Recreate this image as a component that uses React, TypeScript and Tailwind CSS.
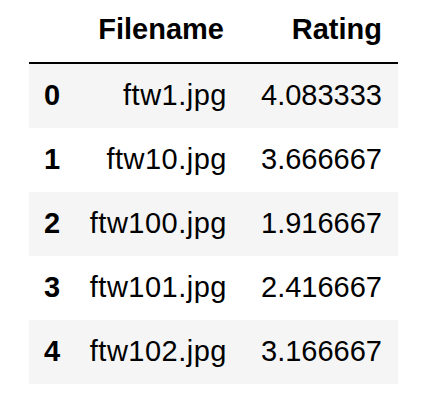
const rows = [
  { idx: 0, file: "ftw1.jpg", rating: "4.083333" },
  { idx: 1, file: "ftw10.jpg", rating: "3.666667" },
  { idx: 2, file: "ftw100.jpg", rating: "1.916667" },
  { idx: 3, file: "ftw101.jpg", rating: "2.416667" },
  { idx: 4, file: "ftw102.jpg", rating: "3.166667" },
];

export default function App() {
  return (
    <div className="w-[448px] h-[408px] bg-white pl-[29px] text-black font-['Liberation_Sans',Arial,sans-serif] text-[29px]">
      <table className="table-fixed w-[369px] border-collapse">
        <colgroup>
          <col className="w-[50px]" />
          <col className="w-[164px]" />
          <col className="w-[155px]" />
        </colgroup>
        <thead>
          <tr className="border-b-2 border-black">
            <th className="h-[62px] p-0" />
            <th className="h-[62px] pt-[13px] pb-[16px] pr-[19px] leading-[33px] text-right font-bold whitespace-nowrap">
              Filename
            </th>
            <th className="h-[62px] pt-[13px] pb-[16px] pr-4 leading-[33px] text-right font-bold whitespace-nowrap">
              Rating
            </th>
          </tr>
        </thead>
        <tbody>
          {rows.map((r) => (
            <tr key={r.idx} className={r.idx % 2 === 0 ? "bg-[#f5f5f5]" : "bg-white"}>
              <th className="h-[64px] pt-[15px] pb-[16px] pl-[15px] leading-[33px] text-left font-bold">
                {r.idx}
              </th>
              <td className="h-[64px] pt-[15px] pb-[16px] pr-4 leading-[33px] text-right whitespace-nowrap tracking-[0.5px]">
                {r.file}
              </td>
              <td className="h-[64px] pt-[15px] pb-[16px] pr-4 leading-[33px] text-right whitespace-nowrap">
                {r.rating}
              </td>
            </tr>
          ))}
        </tbody>
      </table>
    </div>
  );
}
